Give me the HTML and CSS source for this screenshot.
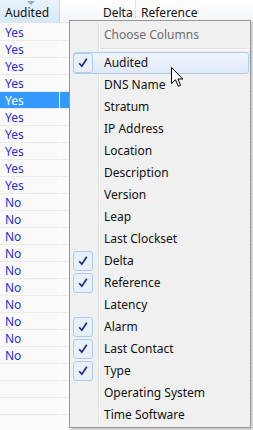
FILE: index.html
```html
<!DOCTYPE html>
<html lang="en">
<head>
    <meta charset="UTF-8">
    <title>Columns</title>
    <link rel="stylesheet" href="styles.css">
</head>
<body>
    <div class="grid">
        <div class="header">
            <div class="col col-audited sorted">Audited<span class="sort-arrow"></span></div>
            <div class="col col-gap"></div>
            <div class="col col-delta">Delta</div>
            <div class="col col-ref">Reference</div>
        </div>
        <div class="rows" id="rows"></div>
    </div>

    <div class="menu">
        <div class="menu-title">Choose Columns</div>
        <div class="menu-sep"></div>
        <div class="menu-items" id="menu-items"></div>
    </div>

    <svg class="cursor" width="13" height="21" viewBox="0 0 13 21">
        <path d="M0.5 0.5 L0.5 16.5 L4.5 12.8 L7.3 19.3 L9.6 18.3 L6.9 12 L11.8 12 Z" fill="#fff" stroke="#000" stroke-width="1" stroke-linejoin="miter"/>
    </svg>

    <script>
        const values = ['Yes','Yes','Yes','Yes','Yes','Yes','Yes','Yes','Yes','Yes',
                        'No','No','No','No','No','No','No','No','No','No','','','',''];
        const rows = document.getElementById('rows');
        values.forEach(function(v, i) {
            const row = document.createElement('div');
            row.className = 'row' + (i === 4 ? ' selected' : '');
            row.innerHTML = '<div class="cell cell-audited">' + v + '</div><div class="cell cell-rest"></div>';
            rows.appendChild(row);
        });

        const columns = [
            ['Audited', true], ['DNS Name', false], ['Stratum', false], ['IP Address', false],
            ['Location', false], ['Description', false], ['Version', false], ['Leap', false],
            ['Last Clockset', false], ['Delta', true], ['Reference', true], ['Latency', false],
            ['Alarm', true], ['Last Contact', true], ['Type', true], ['Operating System', false],
            ['Time Software', false]
        ];
        const items = document.getElementById('menu-items');
        columns.forEach(function(c, i) {
            const item = document.createElement('div');
            item.className = 'menu-item' + (i === 0 ? ' hover' : '');
            let check = '<span class="check-slot"></span>';
            if (c[1]) {
                check = '<span class="check-slot checked"><svg width="10" height="10" viewBox="0 0 10 10"><path d="M1.2 5.2 L3.8 8.2 L8.8 0.8" fill="none" stroke="#1c2a82" stroke-width="1.7"/></svg></span>';
            }
            item.innerHTML = check + '<span class="label">' + c[0] + '</span>';
            items.appendChild(item);
        });
    </script>
</body>
</html>
```

FILE: styles.css
```css
body {
    margin: 0;
    width: 253px;
    height: 430px;
    overflow: hidden;
    font-family: "Noto Sans", "Open Sans", sans-serif;
    font-size: 12px;
    background-color: #fafafa;
    position: relative;
}
.grid {
    display: flex;
    flex-direction: column;
}
.header {
    display: flex;
    height: 22px;
    border-bottom: 1px solid #e3e5e8;
    background: linear-gradient(#ffffff, #f4f5f7);
    margin-bottom: 1px;
}
.col {
    line-height: 25px;
    padding-left: 5px;
    color: #111;
    box-sizing: border-box;
    border-right: 1px solid #e4e6ea;
}
.col-audited {
    width: 60px;
    position: relative;
}
.sorted {
    background: linear-gradient(#e8f4fc, #d6e9f8);
    border-right: 1px solid #b9dcf4;
}
.sort-arrow {
    position: absolute;
    left: 27px;
    top: 1px;
    width: 0;
    height: 0;
    border-left: 4px solid transparent;
    border-right: 4px solid transparent;
    border-top: 4px solid #93aac4;
}
.col-gap {
    width: 38px;
    border-right: none;
}
.col-delta {
    width: 38px;
}
.col-ref {
    flex: 1;
    border-right: none;
}
.row {
    display: flex;
    height: 17px;
    border-bottom: 1px solid #ebebeb;
    box-sizing: border-box;
}
.cell {
    line-height: 17px;
    color: #1e2fd6;
}
.cell-audited {
    width: 60px;
    padding-left: 5px;
    box-sizing: border-box;
    border-right: 1px solid #fff;
}
.cell-rest {
    width: 40px;
}
.row.selected .cell {
    background-color: #3399ff;
    color: #fff;
}
.menu {
    position: absolute;
    left: 69px;
    top: 20px;
    width: 182px;
    height: 408px;
    box-sizing: border-box;
    border: 1px solid #979797;
    background-color: #f0f0f0;
    box-shadow: 2px 2px 2px rgba(0, 0, 0, 0.2);
}
.menu::before {
    content: '';
    position: absolute;
    left: 28px;
    top: 2px;
    bottom: 2px;
    width: 1px;
    background-color: #e2e3e3;
    border-right: 1px solid #fff;
}
.menu-title {
    height: 27px;
    line-height: 27px;
    padding-left: 34px;
    color: #6d6d6d;
}
.menu-sep {
    margin-left: 29px;
    height: 1px;
    background-color: #e0e0e0;
    border-bottom: 1px solid #fff;
    margin-bottom: 2px;
}
.menu-items {
    display: flex;
    flex-direction: column;
    margin-top: 2px;
}
.menu-item {
    height: 22px;
    margin: 0 1px 0 3px;
    display: flex;
    align-items: center;
    box-sizing: border-box;
    border: 1px solid transparent;
    border-radius: 3px;
    position: relative;
}
.menu-item.hover {
    background: linear-gradient(#f0f5fc, #dfe9f7);
    border-color: #a9cdf2;
}
.check-slot {
    width: 20px;
    height: 20px;
    box-sizing: border-box;
    margin-left: -1px;
    margin-right: 11px;
    display: flex;
    align-items: center;
    justify-content: center;
}
.check-slot.checked {
    background-color: #e7eff9;
    border: 1px solid #aecbee;
    border-radius: 3px;
}
.label {
    color: #111;
    line-height: 20px;
}
.cursor {
    position: absolute;
    left: 171px;
    top: 67px;
}
```
